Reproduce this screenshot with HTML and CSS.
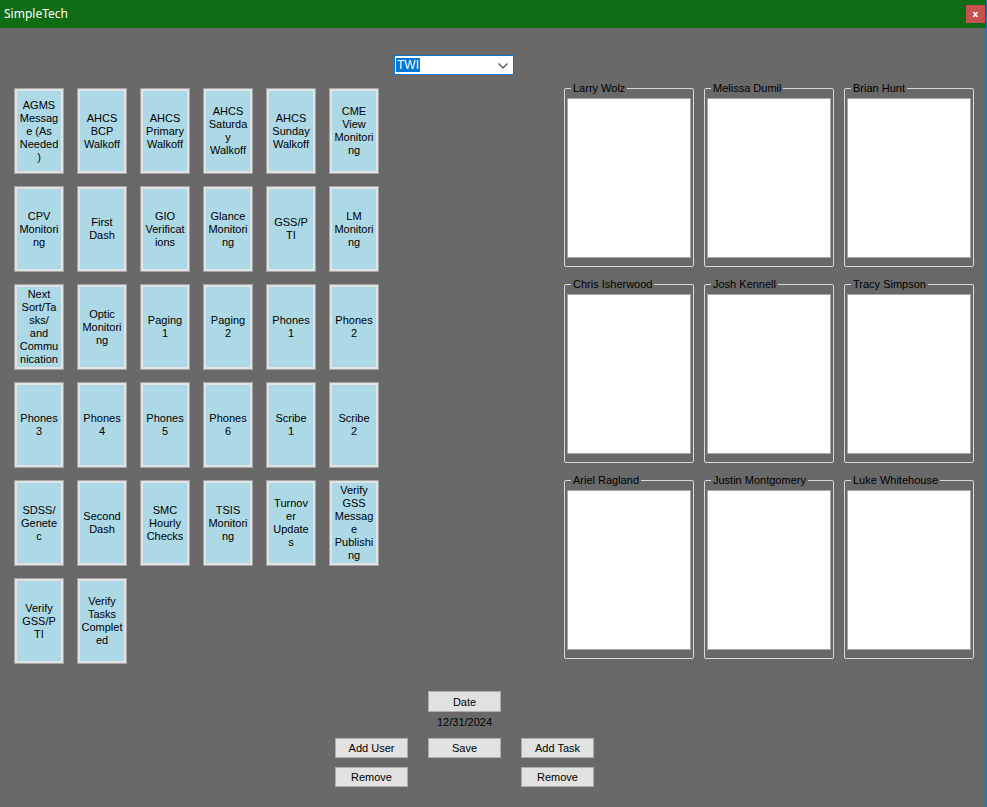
FILE: index.html
```html
<!DOCTYPE html>
<html>
<head>
<meta charset="utf-8">
<title>SimpleTech</title>
<link rel="stylesheet" href="styles.css">
</head>
<body>
<div class="app">
  <div class="titlebar">
    <span class="title">SimpleTech</span>
    <button class="close">x</button>
  </div>
  <div class="content">
    <div class="select-row">
      <div class="select">
        <span class="sel-text">TWI</span>
        <svg class="chev" width="10" height="6" viewBox="0 0 10 6"><polyline points="0.5,0.5 5,5 9.5,0.5" fill="none" stroke="#4a4a4a" stroke-width="1.2"/></svg>
      </div>
    </div>
    <div class="main">
      <div class="tiles">
        <div class="tile">AGMS<br>Messag<br>e (As<br>Needed<br>)</div>
        <div class="tile">AHCS<br>BCP<br>Walkoff</div>
        <div class="tile">AHCS<br>Primary<br>Walkoff</div>
        <div class="tile">AHCS<br>Saturda<br>y<br>Walkoff</div>
        <div class="tile">AHCS<br>Sunday<br>Walkoff</div>
        <div class="tile">CME<br>View<br>Monitori<br>ng</div>

        <div class="tile">CPV<br>Monitori<br>ng</div>
        <div class="tile">First<br>Dash</div>
        <div class="tile">GIO<br>Verificat<br>ions</div>
        <div class="tile">Glance<br>Monitori<br>ng</div>
        <div class="tile">GSS/P<br>TI</div>
        <div class="tile">LM<br>Monitori<br>ng</div>

        <div class="tile">Next<br>Sort/Ta<br>sks/<br>and<br>Commu<br>nication</div>
        <div class="tile">Optic<br>Monitori<br>ng</div>
        <div class="tile">Paging<br>1</div>
        <div class="tile">Paging<br>2</div>
        <div class="tile">Phones<br>1</div>
        <div class="tile">Phones<br>2</div>

        <div class="tile">Phones<br>3</div>
        <div class="tile">Phones<br>4</div>
        <div class="tile">Phones<br>5</div>
        <div class="tile">Phones<br>6</div>
        <div class="tile">Scribe<br>1</div>
        <div class="tile">Scribe<br>2</div>

        <div class="tile">SDSS/<br>Genete<br>c</div>
        <div class="tile">Second<br>Dash</div>
        <div class="tile">SMC<br>Hourly<br>Checks</div>
        <div class="tile">TSIS<br>Monitori<br>ng</div>
        <div class="tile">Turnov<br>er<br>Update<br>s</div>
        <div class="tile">Verify<br>GSS<br>Messag<br>e<br>Publishi<br>ng</div>

        <div class="tile">Verify<br>GSS/P<br>TI</div>
        <div class="tile">Verify<br>Tasks<br>Complet<br>ed</div>
      </div>
      <div class="groups">
        <div class="group"><span class="group-title">Larry Wolz</span><div class="listbox"></div></div>
        <div class="group"><span class="group-title">Melissa Dumil</span><div class="listbox"></div></div>
        <div class="group"><span class="group-title">Brian Hunt</span><div class="listbox"></div></div>
        <div class="group"><span class="group-title">Chris Isherwood</span><div class="listbox"></div></div>
        <div class="group"><span class="group-title">Josh Kennell</span><div class="listbox"></div></div>
        <div class="group"><span class="group-title">Tracy Simpson</span><div class="listbox"></div></div>
        <div class="group"><span class="group-title">Ariel Ragland</span><div class="listbox"></div></div>
        <div class="group"><span class="group-title">Justin Montgomery</span><div class="listbox"></div></div>
        <div class="group"><span class="group-title">Luke Whitehouse</span><div class="listbox"></div></div>
      </div>
    </div>
    <div class="controls">
      <button class="btn c2 r1">Date</button>
      <div class="date-text c2 r2">12/31/2024</div>
      <button class="btn c1 r3">Add User</button>
      <button class="btn c2 r3">Save</button>
      <button class="btn c3 r3">Add Task</button>
      <button class="btn c1 r5">Remove</button>
      <button class="btn c3 r5">Remove</button>
    </div>
  </div>
</div>
</body>
</html>
```
FILE: styles.css
```css
html, body {
  margin: 0;
  padding: 0;
}
body {
  background: #696969;
  font-family: "Liberation Sans", Arial, sans-serif;
  font-size: 11px;
  color: #000;
}
.app {
  width: 986px;
  height: 807px;
  border-right: 1px solid #1a73c4;
  background: #696969;
  overflow: hidden;
}
.titlebar {
  height: 28px;
  background: #106b15;
  display: flex;
  align-items: center;
  justify-content: space-between;
  padding: 0 1px 0 4px;
  box-sizing: border-box;
}
.title {
  color: #fff;
  font-family: "Noto Sans", "Open Sans", sans-serif;
  font-size: 12px;
  margin-top: -1px;
}
.close {
  width: 19px;
  height: 18px;
  margin-top: 0;
  background: #c75050;
  border: none;
  color: #fff;
  font-family: "DejaVu Sans", sans-serif;
  font-weight: bold;
  font-size: 9px;
  line-height: 16px;
  padding: 0;
}
.content {
  padding-top: 27px;
}
.select-row {
  padding-left: 394px;
  height: 20px;
}
.select {
  width: 120px;
  height: 20px;
  box-sizing: border-box;
  border: 1px solid #0078d7;
  background: #fff;
  display: flex;
  align-items: center;
  justify-content: space-between;
  padding: 0 5px 0 1px;
}
.sel-text {
  background: #0078d7;
  color: #fff;
  font-size: 12px;
  line-height: 14px;
  padding: 0 1px;
}
.chev {
  display: block;
  margin-top: 1px;
}
.main {
  display: flex;
  margin-top: 13px;
  padding-left: 14px;
  height: 576px;
}
.tiles {
  display: grid;
  grid-template-columns: repeat(6, 50px);
  grid-auto-rows: 86px;
  column-gap: 13px;
  row-gap: 12px;
  align-content: start;
  width: 365px;
}
.tile {
  box-sizing: border-box;
  background: #add8e6;
  border: 1px solid #a3a3a3;
  box-shadow: inset 0 0 0 2px #e3e3e3;
  display: flex;
  align-items: center;
  justify-content: center;
  text-align: center;
  line-height: 13px;
  font-size: 11px;
  padding: 0 2px;
  white-space: nowrap;
}
.groups {
  margin-left: 185px;
  display: grid;
  grid-template-columns: repeat(3, 130px);
  grid-auto-rows: 179px;
  column-gap: 10px;
  row-gap: 17px;
  align-content: start;
}
.group {
  box-sizing: border-box;
  border: 1px solid #d8d8d8;
  border-radius: 2px;
  display: flex;
  flex-direction: column;
  align-items: flex-start;
}
.group-title {
  margin: -7px 0 0 6px;
  padding: 0 2px;
  background: #696969;
  line-height: 13px;
  white-space: nowrap;
}
.listbox {
  box-sizing: border-box;
  width: 124px;
  height: 160px;
  margin: 3px 0 0 2px;
  background: #fff;
  border: 1px solid #a7a7a7;
}
.controls {
  margin-top: 27px;
  margin-left: 335px;
  display: grid;
  grid-template-columns: 73px 73px 73px;
  column-gap: 20px;
  grid-template-rows: 21px 26px 20px 9px 20px;
}
.btn {
  box-sizing: border-box;
  background: #e1e1e1;
  border: 1px solid #adadad;
  font-family: "Liberation Sans", Arial, sans-serif;
  font-size: 11px;
  color: #000;
  padding: 0;
  margin: 0;
  width: 100%;
  height: 100%;
}
.date-text {
  text-align: center;
  line-height: 13px;
  padding-top: 4px;
  color: #000;
}
.c1 { grid-column: 1; }
.c2 { grid-column: 2; }
.c3 { grid-column: 3; }
.r1 { grid-row: 1; }
.r2 { grid-row: 2; }
.r3 { grid-row: 3; }
.r5 { grid-row: 5; }
```
